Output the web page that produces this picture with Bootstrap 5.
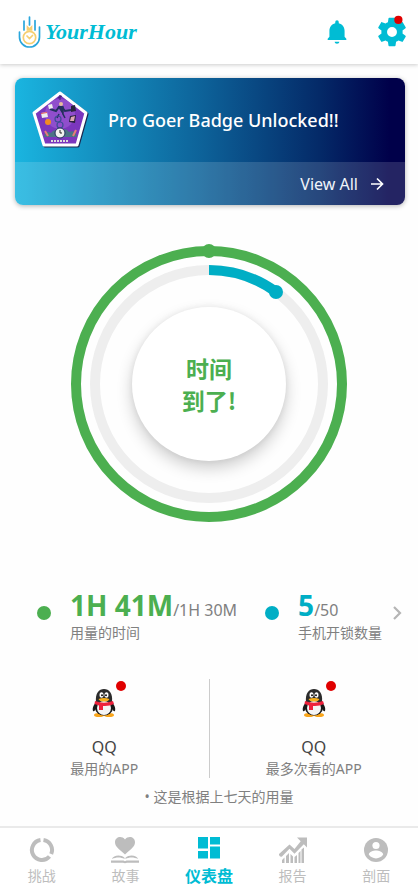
<!DOCTYPE html>
<html lang="zh-CN">
<head>
<meta charset="utf-8">
<meta name="viewport" content="width=device-width, initial-scale=1">
<title>YourHour</title>
<link href="https://cdn.jsdelivr.net/npm/bootstrap@5.3.0/dist/css/bootstrap.min.css" rel="stylesheet">
<style>
  :root { --teal: #00bcd4; --aqua: #00aec5; --leaf: #4caf50; --alert: #e00000; --muted: #808080; }
  body { font-family: "Noto Sans", "Noto Sans CJK SC", sans-serif; font-size: 14px; line-height: 20px; color: #444; background: #fefefe; }
  svg { display: block; }
  .app-header { height: 64px; padding: 0 9px 0 18px; box-shadow: 0 1px 4px rgba(0,0,0,.2); background: #fff; }
  .wordmark { font: italic bold 22px/30px "Liberation Serif", serif; color: var(--teal); }
  .plain { background: none; border: 0; padding: 0; color: inherit; }
  .promo { margin: 14px 13px 0 15px; border-radius: 8px; background: linear-gradient(90deg, #1ab5e0 0%, #0d6299 48%, #042a68 78%, #00004a 96%); box-shadow: 0 1px 5px rgba(0,0,0,.3); color: #fff; }
  .promo-top { height: 84px; padding: 0 16px; gap: 17px; }
  .promo-title { font-size: 18px; line-height: 24px; font-weight: 500; }
  .promo-foot { height: 43px; padding: 0 20px; gap: 11px; background: rgba(255,255,255,.14); font-size: 16px; color: #f0f4fa; }
  .dial { margin: 39px auto 0; width: 280px; }
  .dial-face { width: 154px; height: 154px; background: #fff; box-shadow: 0 7px 16px rgba(0,0,0,.2), 0 0 6px rgba(0,0,0,.06); color: var(--leaf); font: bold 23px/32px "Noto Sans CJK SC", sans-serif; }
  .stats { margin-top: 63px; padding: 0 15px 0 37px; }
  .stat { gap: 19px; }
  .stat + .stat { margin-left: 28px; }
  .dot { width: 14px; height: 14px; margin-bottom: 4px; }
  .stats .plain { margin-bottom: 4px; }
  .figure-line { font-size: 16px; line-height: 24px; color: var(--muted); white-space: nowrap; }
  .figure-line strong { font-size: 28px; line-height: 36px; }
  .green { color: var(--leaf); } .aqua { color: var(--aqua); }
  .muted { color: var(--muted); }
  .apps { margin-top: 36px; }
  .app-cell { height: 99px; padding-top: 10px; }
  .app-cell + .app-cell { border-left: 1px solid #ccc; }
  .notice { width: 10px; height: 10px; background: var(--alert); top: -8px; right: -10px; }
  .app-name { font-size: 16px; line-height: 24px; margin-top: 18px; }
  .note { margin: 9px 0 0; padding-left: 20px; }
  .tabs { margin-top: 19px; height: 61px; border-top: 2px solid #eaeaea; background: #fff; }
  .tabs a { color: #bdbdbd; padding-top: 6px; }
  .tabs svg { height: 32px; }
  .tabs a.current { color: var(--teal); font-weight: 700; font-size: 16px; }
</style>
</head>
<body>
<svg width="0" height="0" class="position-absolute" aria-hidden="true">
  <symbol id="penguin" viewBox="0 0 24 28">
    <ellipse cx="7" cy="26" rx="5" ry="2" fill="#f9a51a"/><ellipse cx="17" cy="26" rx="5" ry="2" fill="#f9a51a"/>
    <path d="M5 12C2 15 0 19 1 22c1 1 2-1 3-2l16 0c1 1 2 3 3 2 1-3-1-7-4-10z" fill="#191919"/>
    <ellipse cx="12" cy="18.500" rx="9" ry="8" fill="#191919"/>
    <path d="M4 13C3 4 7 0 12 0s9 4 8 13z" fill="#2c2c2c"/>
    <ellipse cx="12" cy="19" rx="7" ry="7" fill="#f4f4f4"/>
    <ellipse cx="9.500" cy="6" rx="2" ry="2.800" fill="#fff"/><ellipse cx="14.500" cy="6" rx="2" ry="2.800" fill="#fff"/>
    <circle cx="10" cy="6.300" r="1" fill="#111"/><circle cx="14" cy="6.300" r="1" fill="#111"/>
    <path d="M6.500 10q5.500-2 11 0-1 2.500-5.500 2.500T6.500 10z" fill="#f8b01c"/>
    <path d="M3 12q9 3.500 18 0l1 3q-5 2.500-11 2v4H7v-4.500L2.500 15z" fill="#ee213c"/>
  </symbol>
</svg>

<header class="app-header d-flex align-items-center justify-content-between position-relative">
  <div class="d-flex align-items-center gap-1">
    <svg width="23" height="33" viewBox="0 0 23 33" fill="none" stroke="#2aa6dc" stroke-width="1.700" stroke-linecap="round">
      <path d="M1.500 16v5a10 10 0 0 0 20 0V11M6 14V5M11.500 9V1M17 14V4.500"/>
      <g stroke="#f6cf72"><circle cx="11.500" cy="21.500" r="6.200"/><path d="M9 20l2.500 2.500 3-3M9.500 14v-3l2 2 2-2v3z"/></g>
    </svg>
    <span class="wordmark">YourHour</span>
  </div>
  <div class="d-flex align-items-center gap-4">
    <button class="plain" type="button" aria-label="通知">
      <svg width="28" height="28" viewBox="0 0 24 24" fill="#00bcd4"><path d="M12 22c1.100 0 2-.8 2-1.700h-4c0 .9.900 1.700 2 1.700zm6.500-6v-5c0-3.200-1.900-5.800-5-6.500V3.500a1.500 1.500 0 0 0-3 0v1C7.400 5.200 5.500 7.800 5.500 11v5L4 17.800v1h16v-1z"/></svg>
    </button>
    <button class="plain" type="button" aria-label="设置">
      <svg width="34" height="34" viewBox="0 0 24 24" fill="#00bcd4"><path d="M19.430 12.980c.04-.32.070-.64.070-.98s-.03-.66-.07-.98l2.110-1.650c.19-.15.240-.42.120-.64l-2-3.460c-.12-.22-.39-.3-.61-.22l-2.490 1c-.52-.4-1.080-.73-1.690-.98l-.38-2.650A.49.490 0 0 0 14 2h-4c-.25 0-.46.180-.49.420l-.38 2.650c-.61.250-1.170.590-1.690.98l-2.490-1c-.23-.09-.49 0-.61.220l-2 3.460c-.13.220-.07.490.120.640l2.110 1.650c-.04.320-.07.650-.07.980s.030.660.070.980l-2.110 1.650c-.19.150-.24.420-.12.640l2 3.460c.120.220.390.300.610.220l2.490-1c.520.400 1.080.730 1.690.98l.38 2.650c.03.240.240.420.490.420h4c.25 0 .46-.18.490-.42l.38-2.650c.61-.25 1.170-.59 1.690-.98l2.490 1c.23.090.490 0 .61-.22l2-3.460c.12-.22.070-.49-.12-.64zM12 15.500a3.500 3.500 0 1 1 0-7 3.500 3.500 0 0 1 0 7z"/><circle cx="16.500" cy="3.500" r="2.900" fill="#e00000"/></svg>
    </button>
  </div>
</header>

<main>
  <section class="promo overflow-hidden">
    <div class="promo-top d-flex align-items-center">
      <svg width="60" height="60" viewBox="0 0 60 60">
        <path d="M30 4L56 24 47 56H14L4 24z" fill="#1b2950" stroke="#1b2950" stroke-width="3" stroke-linejoin="round"/>
        <path d="M29 3L55 23 46 55H13L3 23z" fill="#7b36bd" stroke="#fff" stroke-width="3" stroke-linejoin="round"/>
        <circle cx="29" cy="24" r="15" fill="#a263d8" opacity=".55"/>
        <path d="M13 47q1-7 7-4 3-5 9-2 6-4 9 1 7-3 8 5z" fill="#4c7385"/>
        <path d="M14 41l3 5M45 40l-3 6" stroke="#e77c78" stroke-width="2"/>
        <path d="M19 19l6 2 3-4h3l3 4 6-1" fill="none" stroke="#23315d" stroke-width="2"/><path d="M27 17h5v7l2 4M28 24l-2 4" fill="#23315d" stroke="#23315d" stroke-width="1.500"/>
        <circle cx="30" cy="14" r="2" fill="#e7bd9c"/><circle cx="27" cy="29" r="3" fill="none" stroke="#3e4c96" stroke-width="1.200"/><circle cx="29" cy="35" r="3" fill="none" stroke="#3e4c96" stroke-width="1.200"/>
        <circle cx="29" cy="43" r="5" fill="#f2f2ee" stroke="#23315d"/><path d="M29 40v3h2" stroke="#222" fill="none"/>
        <path d="M17 15l4-1 1 4-4 1zM10 23l6-1 1 5-6 1z" fill="#eee"/><path d="M10 23l6-1v1l-6 1z" fill="#e45555"/>
        <path d="M40 16l4-1 1 6-5 1zM39 26l6-1-1 8-6-1z" fill="#29233c"/><path d="M40 27l4-1-1 5-4 0z" fill="#dda6b3"/>
        <circle cx="17" cy="32" r="3" fill="#f18b24"/><path d="M27 8l4-2M29 5v5" stroke="#40206f"/>
        <path d="M20 51h18" stroke="#ddd" stroke-width="2" stroke-dasharray="2 1"/>
      </svg>
      <div class="promo-title">Pro Goer Badge Unlocked!!</div>
    </div>
    <a href="#badges" class="promo-foot d-flex align-items-center justify-content-end text-decoration-none">
      <span>View All</span>
      <svg width="16" height="16" viewBox="0 0 16 16" fill="none" stroke="#fff" stroke-width="1.700"><path d="M2 8h11M8 2.500L13.500 8 8 13.500"/></svg>
    </a>
  </section>

  <section class="dial position-relative">
    <svg viewBox="0 0 280 280" class="w-100" fill="none" stroke-width="10">
      <circle cx="140" cy="140" r="133" stroke="#4caf50"/>
      <circle cx="140" cy="140" r="114" stroke="#eee"/>
      <path d="M140 26A114 114 0 0 1 207 48" stroke="#00aec5"/>
      <circle cx="207" cy="48" r="7" fill="#00aec5" stroke="none"/>
      <circle cx="140" cy="7" r="7" fill="#4caf50" stroke="none"/>
    </svg>
    <div class="dial-face rounded-circle position-absolute top-50 start-50 translate-middle d-flex align-items-center justify-content-center text-center">
      <div>时间<br>到了!</div>
    </div>
  </section>

  <section class="stats d-flex align-items-center">
    <div class="stat d-flex align-items-center">
      <span class="dot rounded-circle flex-shrink-0" style="background:#4caf50"></span>
      <div>
        <div class="figure-line"><strong class="green">1H 41M</strong>/1H 30M</div>
        <div class="muted">用量的时间</div>
      </div>
    </div>
    <div class="stat d-flex align-items-center">
      <span class="dot rounded-circle flex-shrink-0" style="background:#00aec5"></span>
      <div>
        <div class="figure-line"><strong class="aqua">5</strong>/50</div>
        <div class="muted text-nowrap">手机开锁数量</div>
      </div>
    </div>
    <button class="plain ms-auto" type="button" aria-label="下一页"><svg width="12" height="16" viewBox="0 0 12 16" fill="none" stroke="#b5b5b5" stroke-width="2.200"><path d="M3 2l6 6-6 6"/></svg></button>
  </section>

  <section class="apps row g-0 text-center">
    <div class="app-cell col d-flex flex-column align-items-center">
      <div class="position-relative"><svg width="24" height="28"><use href="#penguin"/></svg><span class="notice position-absolute rounded-circle"></span></div>
      <div class="app-name">QQ</div>
      <div class="muted">最用的APP</div>
    </div>
    <div class="app-cell col d-flex flex-column align-items-center">
      <div class="position-relative"><svg width="24" height="28"><use href="#penguin"/></svg><span class="notice position-absolute rounded-circle"></span></div>
      <div class="app-name">QQ</div>
      <div class="muted">最多次看的APP</div>
    </div>
  </section>
  <p class="note text-center muted">• 这是根据上七天的用量</p>
</main>

<nav class="tabs row g-0 text-center">
  <a href="#challenge" class="col d-flex flex-column align-items-center text-decoration-none">
    <svg width="26" viewBox="0 0 26 32" fill="none" stroke="#bdbdbd" stroke-width="4"><path d="M14.500 6.100A10 10 0 0 1 22.200 20M20.500 22.500A10 10 0 1 1 11.500 6.100"/></svg>
    <span>挑战</span>
  </a>
  <a href="#story" class="col d-flex flex-column align-items-center text-decoration-none">
    <svg width="28" viewBox="0 0 28 32" fill="#bdbdbd"><path d="M14 20.500C7 14.500 4 12 4 8.300 4 3 10.500 1.200 14 5.500 17.500 1.200 24 3 24 8.300c0 3.700-3 6.200-10 12.200z"/><path d="M0 26.500h12.500l1.500.8 1.500-.8H28v2.200H16l-2 .6-2-.6H0zM1 25c1-4 9-5 12.500-1.200V25C10 23 5 23 1 25zm26 0c-1-4-9-5-12.500-1.200V25c3.500-2 8.500-2 12.500 0z"/></svg>
    <span>故事</span>
  </a>
  <a href="#dashboard" class="current col d-flex flex-column align-items-center text-decoration-none" aria-current="page">
    <svg width="22" viewBox="0 0 22 32" fill="#00bcd4"><path d="M0 3h10v11.500H0zM0 17h10v7.500H0zM12 3h10v7.500H12zM12 12.500h10v12H12z"/></svg>
    <span>仪表盘</span>
  </a>
  <a href="#report" class="col d-flex flex-column align-items-center text-decoration-none">
    <svg width="28" viewBox="0 0 28 32" fill="#bdbdbd"><path d="M18 3.500h10v10l-3.200-3.200-9.300 9.500-5-5L3 22.500q-2 1-3-1.500l0-1 10.500-9.500 5 4.500 6.200-7.800z"/><path d="M3 26l2.500-2.500v5.500H3zM7 22l3-3v10H7zM11.500 20l2.500 2.500V29h-2.500zM15.500 23l2.500-2v8h-2.500zM19.500 19l2-2v12h-2zM22.500 15.500l2.500-2V29h-2.500z"/></svg>
    <span>报告</span>
  </a>
  <a href="#profile" class="col d-flex flex-column align-items-center text-decoration-none">
    <svg width="24" viewBox="0 0 24 32"><circle cx="12" cy="16" r="12" fill="#bdbdbd"/><circle cx="12" cy="11.500" r="3.600" fill="#fff"/><path d="M4.800 20.500C5 17.500 9.500 16.400 12 16.400s7 1.100 7.200 4.100a8.600 8.600 0 0 1-14.400 0z" fill="#fff"/></svg>
    <span>剖面</span>
  </a>
</nav>
<script src="https://cdn.jsdelivr.net/npm/bootstrap@5.3.0/dist/js/bootstrap.bundle.min.js"></script>
</body>
</html>
